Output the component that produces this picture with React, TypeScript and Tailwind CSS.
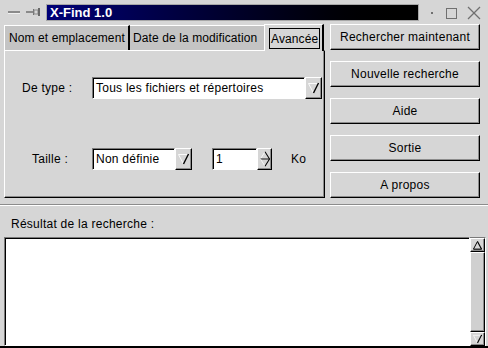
import React from 'react';

const raised =
  'border-t border-l border-t-white border-l-white border-r border-b border-r-black border-b-black shadow-[inset_-1px_-1px_0_#8c8c8c]';
const sunken =
  'bg-white border-t border-l border-t-[#7a7a7a] border-l-[#7a7a7a] border-r border-b border-r-white border-b-white shadow-[inset_1px_1px_0_#000]';

function DownArrow({ size = 11 }: { size?: number }) {
  return (
    <svg width={size} height={size + 1} viewBox="0 0 11 12">
      <line x1="0.5" y1="1.5" x2="10.5" y2="1.5" stroke="#fafafa" strokeWidth="1" />
      <line x1="0.5" y1="1.5" x2="5.5" y2="11" stroke="#fafafa" strokeWidth="1" />
      <line x1="10.5" y1="1" x2="5.5" y2="11" stroke="#000" strokeWidth="1.4" />
    </svg>
  );
}

function UpArrow() {
  return (
    <svg width="9" height="9" viewBox="0 0 11 11">
      <line x1="5.5" y1="0.5" x2="0.5" y2="10" stroke="#000" strokeWidth="1.2" />
      <line x1="5.5" y1="0.5" x2="10.5" y2="10" stroke="#000" strokeWidth="1.4" />
      <line x1="0.5" y1="10" x2="10.5" y2="10" stroke="#000" strokeWidth="1.4" />
    </svg>
  );
}

function SpinArrow() {
  return (
    <svg width="10" height="18" viewBox="0 0 11 18">
      <line x1="5.5" y1="1" x2="0.5" y2="9" stroke="#fafafa" strokeWidth="1" />
      <line x1="5.5" y1="1" x2="10.5" y2="9" stroke="#000" strokeWidth="1.2" />
      <line x1="0.5" y1="9" x2="10.5" y2="9" stroke="#000" strokeWidth="1" />
      <line x1="0.5" y1="9" x2="5.5" y2="17" stroke="#fafafa" strokeWidth="1" />
      <line x1="10.5" y1="9" x2="5.5" y2="17" stroke="#000" strokeWidth="1.2" />
    </svg>
  );
}

function Combo({ value, width, spin }: { value: string; width: string; spin?: boolean }) {
  return (
    <div className={`flex h-[22px] ${width}`}>
      <div className={`flex-1 flex items-center pl-[3px] whitespace-nowrap ${sunken}`}>{value}</div>
      <div className={`${spin ? 'w-[15px]' : 'w-[17px]'} bg-[#d6d6d6] flex items-center justify-center ${raised}`}>
        {spin ? <SpinArrow /> : <DownArrow />}
      </div>
    </div>
  );
}

const buttons = ['Rechercher maintenant', 'Nouvelle recherche', 'Aide', 'Sortie', 'A propos'];

export default function App() {
  return (
    <div className="w-[488px] h-[348px] bg-[#d6d6d6] flex flex-col font-['Liberation_Sans',Arial,sans-serif] text-[12px] tracking-[0.25px] text-black border-b-2 border-b-black overflow-hidden select-none">
      {/* Barre de titre */}
      <div className="h-[24px] flex items-center shrink-0">
        <svg width="46" height="24" viewBox="0 0 46 24">
          <rect x="8" y="11" width="12" height="2" fill="#8a8a8a" />
          <rect x="8" y="13" width="12" height="1" fill="#f0f0f0" />
          <rect x="26" y="11" width="7" height="2" fill="#8a8a8a" />
          <rect x="33" y="9" width="1" height="6" fill="#6a6a6a" />
          <rect x="34" y="10" width="4" height="4" fill="none" stroke="#8a8a8a" strokeWidth="1" />
          <rect x="38" y="8" width="2" height="8" fill="#6a6a6a" />
        </svg>
        <div className="w-[373px] h-[17px] bg-gradient-to-r from-[#000078] to-black border border-[#a8a8a8] pl-[3px] flex items-center text-white font-bold text-[13px] tracking-normal leading-none">
          X-Find 1.0
        </div>
        <svg width="69" height="24" viewBox="0 0 69 24">
          <rect x="12" y="12" width="2" height="2" fill="#707070" />
          <rect x="27.5" y="8.5" width="10" height="10" fill="none" stroke="#707070" strokeWidth="1" />
          <line x1="49" y1="7" x2="61" y2="19" stroke="#707070" strokeWidth="1.2" />
          <line x1="61" y1="7" x2="49" y2="19" stroke="#707070" strokeWidth="1.2" />
        </svg>
      </div>

      {/* Onglets, panneau et boutons */}
      <div className="flex pl-[4px] h-[174px] shrink-0">
        <div className="w-[321px] flex flex-col">
          <div className="h-[26px] flex items-end">
            <div className="w-[126px] h-[25px] bg-[#c4c4c4] border-t border-l border-white border-r-2 border-r-black flex items-center pl-[4px] whitespace-nowrap tracking-[0.1px]">
              Nom et emplacement
            </div>
            <div className="w-[134px] h-[25px] bg-[#c4c4c4] border-t border-white flex items-center pl-[3px] whitespace-nowrap tracking-[0.1px]">
              Date de la modification
            </div>
            <div className="relative z-10 w-[60px] h-[27px] -mb-[1px] bg-[#d6d6d6] border-t border-l border-white border-r-2 border-r-black flex items-start pt-[3px] pl-[4px]">
              <span className="border border-black px-[1px] h-[21px] flex items-center tracking-[0.1px]">Avancée</span>
            </div>
          </div>
          <div className="h-[148px] flex flex-col border-t border-l border-t-white border-l-white border-r border-b border-r-black border-b-black shadow-[inset_-1px_-1px_0_#8c8c8c]">
            <div className="mt-[26px] flex items-center h-[22px]">
              <div className="w-[87px] pl-[17px]">De type :</div>
              <Combo value="Tous les fichiers et répertoires" width="w-[230px]" />
            </div>
            <div className="mt-[49px] flex items-center h-[22px]">
              <div className="w-[87px] pl-[27px]">Taille :</div>
              <Combo value="Non définie" width="w-[100px]" />
              <div className="ml-[20px]">
                <Combo value="1" width="w-[60px]" spin />
              </div>
              <div className="ml-[19px]">Ko</div>
            </div>
          </div>
        </div>
        <div className="ml-[5px] w-[150px] flex flex-col gap-[11px]">
          {buttons.map((b) => (
            <div key={b} className={`h-[26px] flex items-center justify-center whitespace-nowrap ${raised}`}>
              {b}
            </div>
          ))}
        </div>
      </div>

      {/* Séparateur */}
      <div className="mt-[6px] h-[2px] border-t border-t-[#8c8c8c] border-b border-b-white shrink-0" />

      <div className="h-[31px] pt-[4px] pl-[11px] flex items-center shrink-0">Résultat de la recherche :</div>

      {/* Zone de résultats */}
      <div className="flex-1 flex pl-[4px] pr-[2px]">
        <div className={`flex-1 ${sunken} border-b-[#c8c8c8] border-r-[#c8c8c8]`} />
        <div className="w-[16px] flex flex-col bg-[#c4c4c4] border-t border-t-[#7a7a7a] border-r border-r-white">
          <div className={`h-[14px] bg-[#d6d6d6] flex items-center justify-center ${raised}`}>
            <UpArrow />
          </div>
          <div className={`flex-1 bg-[#d0d0d0] ${raised}`} />
          <div className={`h-[14px] bg-[#d6d6d6] flex items-center justify-center ${raised}`}>
            <DownArrow size={9} />
          </div>
        </div>
      </div>
    </div>
  );
}
